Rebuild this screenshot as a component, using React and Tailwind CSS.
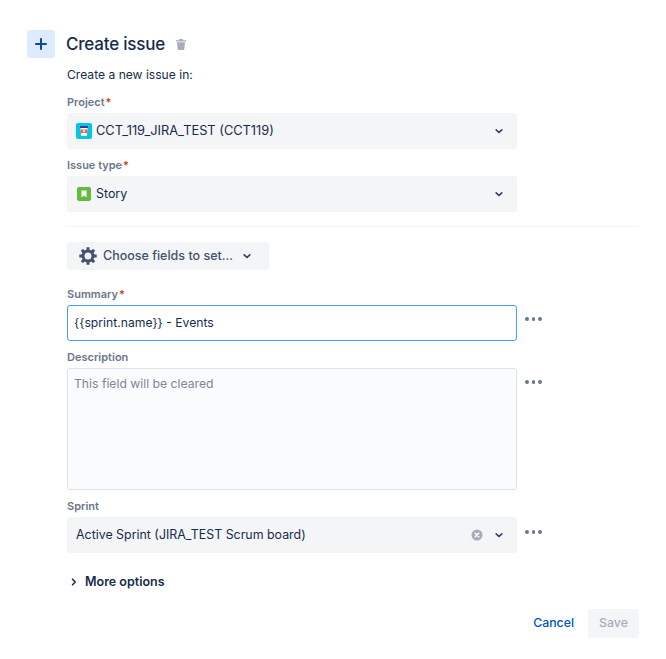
import React from 'react';

const Chevron = ({ className = '' }) => (
  <svg width="16" height="16" viewBox="0 0 16 16" className={className}>
    <path d="M5.200 6.900 8 9.500l2.800-2.600" fill="none" stroke="#344563" strokeWidth="1.700" strokeLinecap="round" strokeLinejoin="round" />
  </svg>
);

const Dots = ({ className = '' }) => (
  <div className={`flex gap-[3px] ml-2 h-[28px] items-center w-[17px] shrink-0 ${className}`}>
    <span className="w-[4px] h-[4px] rounded-full bg-[#6b778c]" />
    <span className="w-[4px] h-[4px] rounded-full bg-[#6b778c]" />
    <span className="w-[4px] h-[4px] rounded-full bg-[#6b778c]" />
  </div>
);

const Label = ({ children, required }) => (
  <div className="h-[16px] flex items-center text-[11px] leading-[16px] font-semibold text-[#6b778c]">
    {children}
    {required && <span className="text-[#de350b] ml-[1px]">*</span>}
  </div>
);

const Select = ({ children, right }) => (
  <div className="w-[450px] h-[36px] rounded-[3px] bg-[#f4f5f7] flex items-center pl-[9px] pr-[10px] text-[12.8px] text-[#172b4d]">
    <div className="flex-1 flex items-center">{children}</div>
    {right}
    <Chevron />
  </div>
);

const ProjectIcon = () => (
  <svg width="16" height="16" viewBox="0 0 16 16" className="mr-[4px]">
    <rect width="16" height="16" rx="2" fill="#00c7e6" />
    <rect x="4" y="3" width="8" height="2" rx="0.5" fill="#403294" />
    <path d="M4.500 5h7l-.6 8H5.100z" fill="#fff" />
    <rect x="4.800" y="6.500" width="6.400" height="3.500" fill="#ff5630" />
    <circle cx="8" cy="8.200" r="1.100" fill="#fff" />
  </svg>
);

const StoryIcon = () => (
  <svg width="14" height="14" viewBox="0 0 14 14" className="ml-[1px] mr-[5px]">
    <rect width="14" height="14" rx="2" fill="#63ba3c" />
    <path d="M4.500 3.500h5v7L7 8.600l-2.500 1.900z" fill="#fff" />
  </svg>
);

const Gear = () => (
  <svg width="20" height="20" viewBox="0 0 20 20" className="mr-[5px] -ml-[1px]">
    <circle cx="10" cy="10" r="5" fill="none" stroke="#42526e" strokeWidth="3" />
    <path
      d="M10 1.300v3.500M10 15.200v3.500M1.300 10h3.500M15.200 10h3.500M3.850 3.850l2.500 2.500M13.650 13.650l2.500 2.500M3.850 16.150l2.500-2.500M13.650 6.350l2.500-2.500"
      stroke="#42526e"
      strokeWidth="3"
    />
  </svg>
);

export default function App() {
  return (
    <div className="w-[666px] h-[659px] bg-white font-['Inter',sans-serif] pt-[30px] pl-[27px] pr-[27px]">
      <div className="flex items-center h-[28px]">
        <div className="w-[28px] h-[28px] rounded-[3px] bg-[#deebff] flex items-center justify-center">
          <svg width="14" height="14" viewBox="0 0 14 14">
            <path d="M7 2v10M2 7h10" stroke="#0747a6" strokeWidth="2" strokeLinecap="round" />
          </svg>
        </div>
        <div className="ml-[11px] pt-[1px] text-[17px] font-medium text-[#172b4d] tracking-[-0.2px]">Create issue</div>
        <svg width="14" height="14" viewBox="0 0 14 14" className="ml-[9px]">
          <path d="M2 3.200h10v1.300H2zM5.200 2h3.600v1.200H5.200zM3 5.200h8l-.7 7a.8.8 0 0 1-.8.700h-5a.8.8 0 0 1-.8-.7z" fill="#a5adba" />
        </svg>
      </div>

      <div className="ml-[40px] w-[572px]">
        <div className="mt-[9px] h-[16px] flex items-center text-[12.1px] text-[#172b4d]">Create a new issue in:</div>

        <div className="mt-[11px] mb-[3px]"><Label required>Project</Label></div>
        <Select>
          <ProjectIcon />
          CCT_119_JIRA_TEST (CCT119)
        </Select>

        <div className="mt-[8px] mb-[3px]"><Label required>Issue type</Label></div>
        <Select>
          <StoryIcon />
          <span className="text-[12.4px]">Story</span>
        </Select>

        <div className="mt-[14px] border-t border-[#f4f5f7]" />

        <div className="mt-[15px] w-[202px] h-[28px] rounded-[3px] bg-[#f4f5f7] flex items-center pl-[12px] text-[12.5px] font-medium text-[#42526e]">
          <Gear />
          Choose fields to set...
          <Chevron className="ml-[6px]" />
        </div>

        <div className="mt-[16px] mb-[3px]"><Label required>Summary</Label></div>
        <div className="flex items-start">
          <div className="w-[450px] h-[36px] rounded-[3px] border border-[#4c9aff] bg-white flex items-center pl-[6px] text-[12.2px] text-[#172b4d]">
            {'{{sprint.name}} - Events'}
          </div>
          <Dots />
        </div>

        <div className="mt-[8px] mb-[3px]"><Label>Description</Label></div>
        <div className="flex items-start">
          <div className="w-[450px] h-[122px] rounded-[3px] border border-[#dfe1e6] bg-[#fafbfc] pl-[6px] pt-[7px] text-[12.2px] leading-[16px] text-[#7a869a]">
            This field will be cleared
          </div>
          <Dots />
        </div>

        <div className="mt-[8px] mb-[3px]"><Label>Sprint</Label></div>
        <div className="flex items-start">
          <Select
            right={
              <svg width="12" height="12" viewBox="0 0 12 12" className="mr-[8px]">
                <circle cx="6" cy="6" r="5.500" fill="#a5adba" />
                <path d="M4.200 4.200l3.600 3.600M7.800 4.200l-3.600 3.600" stroke="#fff" strokeWidth="1.500" strokeLinecap="round" />
              </svg>
            }
          >
            <span className="text-[12.4px]">Active Sprint (JIRA_TEST Scrum board)</span>
          </Select>
          <Dots className="mt-[1px]" />
        </div>

        <div className="mt-[21px] h-[16px] flex items-center text-[12.5px] font-semibold text-[#172b4d]">
          <svg width="8" height="10" viewBox="0 0 8 10" className="ml-[3px] mr-[7px]">
            <path d="M2.500 2.200 5.300 5 2.500 7.800" fill="none" stroke="#172b4d" strokeWidth="1.600" strokeLinecap="round" strokeLinejoin="round" />
          </svg>
          More options
        </div>

        <div className="mt-[19px] flex justify-end items-center">
          <span className="text-[12.3px] font-medium text-[#0052cc] mr-[14px]">Cancel</span>
          <div className="w-[51px] h-[29px] rounded-[3px] bg-[#f4f5f7] flex items-center justify-center text-[12.3px] font-medium text-[#a5adba]">
            Save
          </div>
        </div>
      </div>
    </div>
  );
}
